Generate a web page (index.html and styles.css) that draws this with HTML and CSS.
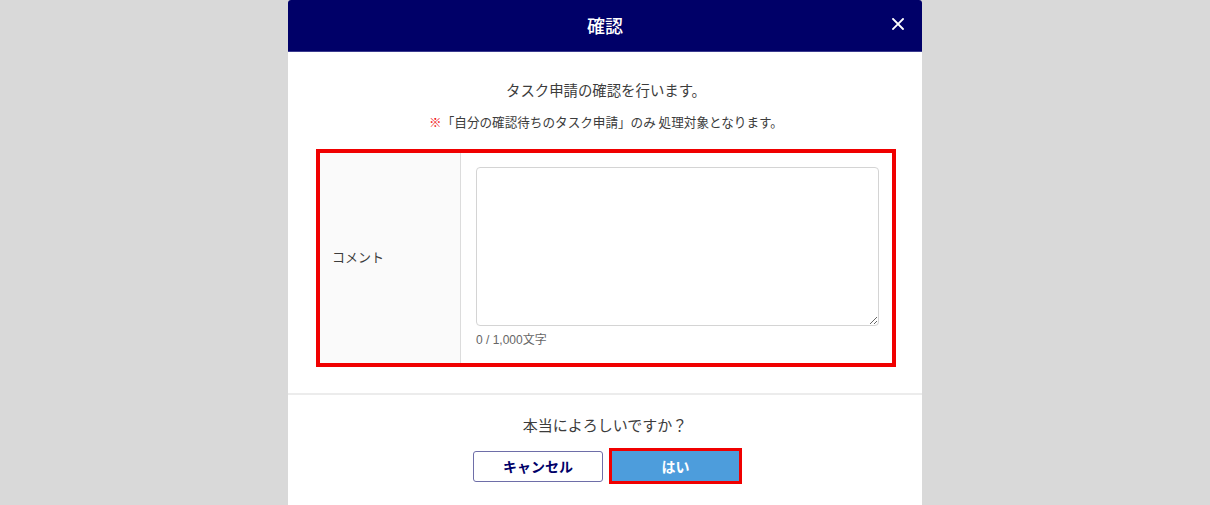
FILE: index.html
```html
<!DOCTYPE html>
<html lang="ja">
<head>
<meta charset="utf-8">
<title>確認</title>
<link rel="stylesheet" href="styles.css">
</head>
<body>
<div class="modal">
  <div class="modal-header">
    <span class="modal-title">確認</span>
    <button class="close-btn" aria-label="閉じる">
      <svg width="12" height="12" viewBox="0 0 12 12"><path d="M1 1 L11 11 M11 1 L1 11" stroke="#fff" stroke-width="1.8" stroke-linecap="square"/></svg>
    </button>
  </div>
  <div class="modal-body">
    <p class="lead">タスク申請の確認を行います。</p>
    <p class="note"><span class="mark">※</span>「自分の確認待ちのタスク申請」のみ 処理対象となります。</p>
    <div class="form-box">
      <div class="label-cell">コメント</div>
      <div class="input-cell">
        <textarea class="comment"></textarea>
        <div class="counter">0 / 1,000文字</div>
      </div>
    </div>
  </div>
  <div class="modal-footer">
    <p class="confirm">本当によろしいですか？</p>
    <div class="actions">
      <button class="btn btn-cancel">キャンセル</button>
      <div class="highlight"><button class="btn btn-ok">はい</button></div>
    </div>
  </div>
</div>
</body>
</html>
```

FILE: styles.css
```css
html, body {
  margin: 0;
  padding: 0;
  background: #d9d9d9;
  font-family: "Noto Sans CJK JP", "Noto Sans", "Liberation Sans", sans-serif;
  color: #333;
}
.modal {
  width: 634px;
  margin: 0 auto;
  background: #fff;
  border-radius: 3px 3px 0 0;
  overflow: hidden;
}
.modal-header {
  height: 51px;
  background: #000068;
  border-bottom: 1px solid #3a3a8e;
  display: flex;
  align-items: center;
  justify-content: center;
  position: relative;
}
.modal-title {
  color: #fff;
  font-size: 18px;
  font-weight: 500;
  line-height: 1;
  margin-top: -1px;
}
.close-btn {
  position: absolute;
  right: 17px;
  top: 17px;
  width: 14px;
  height: 14px;
  padding: 0;
  border: 0;
  background: transparent;
  display: flex;
  align-items: center;
  justify-content: center;
}
.modal-body {
  padding: 27px 26px 26px 28px;
}
.lead {
  margin: 0;
  text-align: center;
  font-size: 14.4px;
  line-height: 22px;
  color: #3c3c3c;
}
.note {
  margin: 10px 0 0;
  text-align: center;
  font-size: 12.6px;
  line-height: 21px;
  color: #3c3c3c;
}
.mark {
  color: #f00000;
  font-weight: bold;
}
.form-box {
  margin-top: 17px;
  border: 4px solid #f00000;
  display: flex;
  height: 210px;
}
.label-cell {
  width: 141px;
  background: #fafafa;
  border-right: 1px solid #dcdcdc;
  display: flex;
  align-items: center;
  padding-left: 12px;
  padding-bottom: 4px;
  box-sizing: border-box;
  font-size: 13px;
  color: #3c3c3c;
}
.input-cell {
  flex: 1;
  padding: 14px 13px 0 15px;
}
.comment {
  display: block;
  width: 100%;
  height: 159px;
  box-sizing: border-box;
  border: 1px solid #d4d4d4;
  border-radius: 4px;
  resize: vertical;
  margin: 0;
  font-family: inherit;
}
.counter {
  margin-top: 4px;
  font-size: 12px;
  color: #666;
  font-family: "Liberation Sans", "Noto Sans CJK JP", sans-serif;
}
.modal-footer {
  border-top: 2px solid #ececec;
  padding: 19px 0 40px;
}
.confirm {
  margin: 0;
  text-align: center;
  font-size: 15px;
  line-height: 22px;
  color: #3c3c3c;
}
.actions {
  margin-top: 12px;
  display: flex;
  justify-content: center;
  align-items: center;
  gap: 6px;
  padding-left: 5px;
}
.btn {
  font-family: inherit;
  font-size: 14px;
  font-weight: bold;
  cursor: pointer;
  margin: 0;
}
.btn-cancel {
  width: 130px;
  height: 31px;
  background: #fff;
  border: 1px solid #6e6ea8;
  border-radius: 3px;
  color: #000068;
}
.highlight {
  border: 3px solid #f00000;
  display: flex;
}
.btn-ok {
  width: 127px;
  height: 30px;
  background: #4d9ddc;
  border: 0;
  color: #fff;
}
```
